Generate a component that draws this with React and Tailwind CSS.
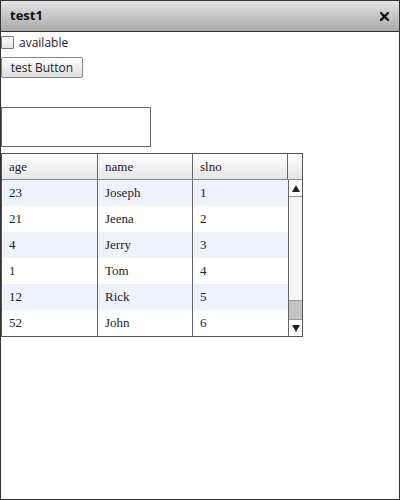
import React from "react";

const rows = [
  ["23", "Joseph", "1"],
  ["21", "Jeena", "2"],
  ["4", "Jerry", "3"],
  ["1", "Tom", "4"],
  ["12", "Rick", "5"],
  ["52", "John", "6"],
];

export default function App() {
  return (
    <div className="w-[400px] h-[500px] border border-[#333] bg-white flex flex-col font-['Open_Sans',sans-serif] text-[#222] overflow-hidden">
      <div className="h-[31px] shrink-0 border-b border-[#333] bg-gradient-to-b from-[#e4e4e4] to-[#a9a9a9] flex items-center justify-between pl-[9px] pr-[10px]">
        <span className="font-bold text-[13px] text-[#111]">test1</span>
        <svg width="9" height="9" viewBox="0 0 9 9">
          <path d="M1 1 L8 8 M8 1 L1 8" stroke="#111" strokeWidth="2.4" strokeLinecap="square" />
        </svg>
      </div>
      <div className="flex items-center mt-[4px] h-[13px]">
        <div className="w-[13px] h-[13px] border border-[#777] bg-gradient-to-b from-white to-[#e6e6e6] rounded-[1px]" />
        <span className="ml-[5px] text-[12px] leading-none text-[#222]">available</span>
      </div>
      <div className="mt-[8px]">
        <button className="w-[82px] h-[21px] border border-[#888] rounded-[2px] bg-gradient-to-b from-white to-[#dedede] text-[12px] leading-none text-[#222] flex items-center justify-center">
          test Button
        </button>
      </div>
      <div className="mt-[29px] w-[150px] h-[40px] border border-[#666] bg-white" />
      <div className="mt-[6px] w-[302px] border border-[#555] font-['Liberation_Serif',serif] text-[13px] text-[#222]">
        <div className="flex h-[26px] bg-gradient-to-b from-white to-[#e6e6e6] border-b border-[#888]">
          <div className="w-[96px] border-r border-[#666] pl-[7px] flex items-center">age</div>
          <div className="w-[95px] border-r border-[#666] pl-[7px] flex items-center">name</div>
          <div className="w-[95px] border-r border-[#666] pl-[7px] flex items-center">slno</div>
          <div className="flex-1" />
        </div>
        <div className="flex">
          <div className="w-[286px]">
            {rows.map((r, i) => (
              <div key={i} className={"flex h-[26px] " + (i % 2 === 0 ? "bg-[#eef3fb]" : "bg-white")}>
                <div className="w-[96px] border-r border-[#666] pl-[7px] flex items-center">{r[0]}</div>
                <div className="w-[95px] border-r border-[#666] pl-[7px] flex items-center">{r[1]}</div>
                <div className="w-[95px] pl-[7px] flex items-center">{r[2]}</div>
              </div>
            ))}
          </div>
          <div className="w-[14px] border-l border-[#666] flex flex-col bg-[#f6f6f6]">
            <div className="h-[17px] border-b border-[#999] bg-white flex items-center justify-center">
              <svg width="8" height="7" viewBox="0 0 8 7"><path d="M4 0 L8 7 L0 7 Z" fill="#222" /></svg>
            </div>
            <div className="flex-1" />
            <div className="h-[20px] bg-[#c4c4c4] border-y border-[#999]" />
            <div className="h-[16px] bg-white flex items-center justify-center">
              <svg width="8" height="7" viewBox="0 0 8 7"><path d="M0 0 L8 0 L4 7 Z" fill="#222" /></svg>
            </div>
          </div>
        </div>
      </div>
    </div>
  );
}
